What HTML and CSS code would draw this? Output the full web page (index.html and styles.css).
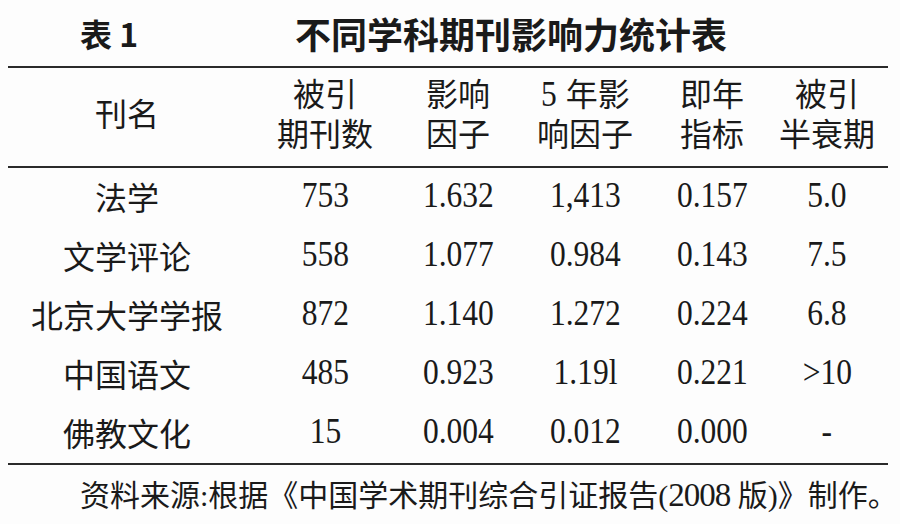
FILE: index.html
```html
<!DOCTYPE html>
<html lang="zh-CN">
<head>
    <meta charset="UTF-8">
    <meta name="viewport" content="width=device-width, initial-scale=1.0">
    <title>不同学科期刊影响力统计表</title>
    <link rel="stylesheet" href="styles.css">
</head>
<body>

    <div class="page">
        <div class="caption">
            <span class="caption-no">表 1</span>
            <span class="caption-title">不同学科期刊影响力统计表</span>
        </div>

        <table class="stats">
            <colgroup>
                <col class="c-name">
                <col class="c-cited">
                <col class="c-if">
                <col class="c-if5">
                <col class="c-imm">
                <col class="c-half">
            </colgroup>
            <thead>
                <tr>
                    <th>刊名</th>
                    <th>被引<br>期刊数</th>
                    <th>影响<br>因子</th>
                    <th><span class="num">5</span> 年影<br>响因子</th>
                    <th>即年<br>指标</th>
                    <th>被引<br>半衰期</th>
                </tr>
            </thead>
            <tbody>
                <tr>
                    <td>法学</td>
                    <td><span class="num">753</span></td>
                    <td><span class="num">1.632</span></td>
                    <td><span class="num">1,413</span></td>
                    <td><span class="num">0.157</span></td>
                    <td><span class="num">5.0</span></td>
                </tr>
                <tr>
                    <td>文学评论</td>
                    <td><span class="num">558</span></td>
                    <td><span class="num">1.077</span></td>
                    <td><span class="num">0.984</span></td>
                    <td><span class="num">0.143</span></td>
                    <td><span class="num">7.5</span></td>
                </tr>
                <tr>
                    <td>北京大学学报</td>
                    <td><span class="num">872</span></td>
                    <td><span class="num">1.140</span></td>
                    <td><span class="num">1.272</span></td>
                    <td><span class="num">0.224</span></td>
                    <td><span class="num">6.8</span></td>
                </tr>
                <tr>
                    <td>中国语文</td>
                    <td><span class="num">485</span></td>
                    <td><span class="num">0.923</span></td>
                    <td><span class="num">1.19l</span></td>
                    <td><span class="num">0.221</span></td>
                    <td><span class="num">&gt;10</span></td>
                </tr>
                <tr>
                    <td>佛教文化</td>
                    <td><span class="num">15</span></td>
                    <td><span class="num">0.004</span></td>
                    <td><span class="num">0.012</span></td>
                    <td><span class="num">0.000</span></td>
                    <td><span class="num">-</span></td>
                </tr>
            </tbody>
        </table>

        <p class="source">资料来源:根据《中国学术期刊综合引证报告(<span class="num">2008</span> 版)》制作。</p>
    </div>

</body>
</html>
```

FILE: styles.css
```css
body {
    margin: 0;
    background: #fdfdfd;
    color: #1a1a1a;
    font-family: "Liberation Serif", "Noto Sans CJK SC", serif;
}
.page {
    width: 880px;
    padding: 0 12px 0 8px;
}
.caption {
    display: flex;
    align-items: center;
    height: 66px;
    font-family: "Noto Sans CJK SC", sans-serif;
    font-weight: 700;
}
.caption-no {
    font-size: 32px;
    margin-left: 72px;
    width: 215px;
}
.caption-title {
    font-size: 36px;
}
.stats {
    width: 880px;
    border-collapse: collapse;
    table-layout: fixed;
    font-size: 32px;
    border-top: 2px solid #2a2a2a;
    border-bottom: 2px solid #2a2a2a;
}
.c-name { width: 238px; }
.c-cited { width: 158px; }
.c-if { width: 108px; }
.c-if5 { width: 146px; }
.c-imm { width: 108px; }
.c-half { width: 122px; }
.stats th {
    font-weight: 400;
    line-height: 40px;
    padding: 7px 0 11px;
    text-align: center;
    border-bottom: 2px solid #2a2a2a;
    white-space: nowrap;
}
.stats td {
    height: 55px;
    padding: 0 0 4px;
    text-align: center;
    white-space: nowrap;
}
.num {
    display: inline-block;
    font-size: 35px;
    transform: scaleX(0.9);
}
.source {
    margin: 0;
    padding-left: 72px;
    line-height: 60px;
    font-size: 30px;
    white-space: nowrap;
}
.source .num {
    font-size: 33px;
    transform: none;
    letter-spacing: -1px;
}
```
